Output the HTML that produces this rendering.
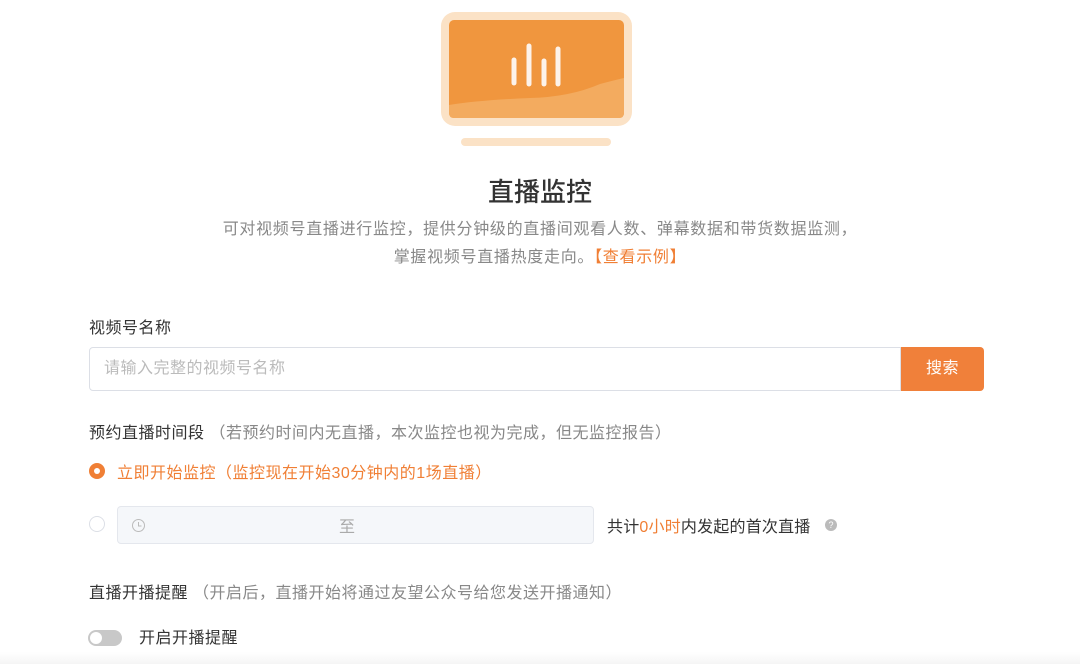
<html><head><style>
body{margin:0;width:1080px;height:664px;background:#fff;font-family:"Liberation Sans","Noto Sans CJK SC",sans-serif;position:relative;overflow:hidden;letter-spacing:0.5px}
.a{position:absolute;white-space:nowrap}
</style></head><body>
<svg class="a" style="left:0;top:0" width="1080" height="160">
<rect x="441" y="12" width="191" height="114" rx="14" fill="#fbe2c6"/>
<rect x="449" y="20" width="175" height="98" rx="5" fill="#f0963e"/>
<path d="M449 105 Q480 100 530 98 Q570 97 600 84 Q615 80 624 78 L624 113 Q624 118 619 118 L454 118 Q449 118 449 113Z" fill="#f3ab5f"/>
<g stroke="#fdf3ea" stroke-width="5" stroke-linecap="round">
<line x1="514" y1="60" x2="514" y2="83"/><line x1="529" y1="46" x2="529" y2="84"/><line x1="544" y1="61" x2="544" y2="84"/><line x1="558" y1="49" x2="558" y2="84"/></g>
<rect x="461" y="138" width="150" height="8" rx="4" fill="#fbe2c6"/>
</svg>
<div class="a" style="left:0;width:1080px;text-align:center;top:172px;font-size:26px;color:#333;font-weight:500;letter-spacing:0">直播监控</div>
<div class="a" style="left:0;width:1080px;text-align:center;top:216px;font-size:16px;color:#888;line-height:28px;letter-spacing:0.7px">可对视频号直播进行监控，提供分钟级的直播间观看人数、弹幕数据和带货数据监测，<br>掌握视频号直播热度走向。<span style="color:#f07f35">【查看示例】</span></div>
<div class="a" style="left:89px;top:314px;font-size:16px;color:#333">视频号名称</div>
<div class="a" style="left:89px;top:347px;width:812px;height:44px;border:1px solid #dcdfe6;border-radius:4px 0 0 4px;box-sizing:border-box;font-size:16px;color:#bbb;line-height:42px;padding-left:14px">请输入完整的视频号名称</div>
<div class="a" style="left:901px;top:347px;width:83px;height:44px;background:#f0803a;border-radius:0 4px 4px 0;color:#fff;font-size:16px;text-align:center;line-height:44px">搜索</div>
<div class="a" style="left:89px;top:419px;font-size:16px;color:#333">预约直播时间段<span style="color:#888"> （若预约时间内无直播，本次监控也视为完成，但无监控报告）</span></div>
<div class="a" style="left:89px;top:463px;width:16px;height:16px;border-radius:50%;background:#f07f35"><div style="margin:5px;width:6px;height:6px;border-radius:50%;background:#fff"></div></div>
<div class="a" style="left:117px;top:459px;font-size:16px;color:#f07f35">立即开始监控（监控现在开始30分钟内的1场直播）</div>
<div class="a" style="left:89px;top:516px;width:14px;height:14px;border-radius:50%;border:1px solid #dcdfe6"></div>
<div class="a" style="left:117px;top:506px;width:477px;height:38px;background:#f5f7fa;border:1px solid #e4e7ed;border-radius:4px;box-sizing:border-box"></div>
<svg class="a" style="left:131px;top:518px" width="15" height="15"><circle cx="7.5" cy="7.5" r="6" fill="none" stroke="#bbb" stroke-width="1"/><path d="M7.5 4v4h3" fill="none" stroke="#bbb"/></svg>
<div class="a" style="left:339px;top:513px;font-size:16px;color:#aaa">至</div>
<div class="a" style="left:607px;top:513px;font-size:16px;color:#333;letter-spacing:0.2px">共计<span style="color:#f07f35">0小时</span>内发起的首次直播</div>
<div class="a" style="left:825px;top:519px;width:12px;height:12px;border-radius:50%;background:#bbb;color:#fff;font-size:9px;text-align:center;line-height:12px;letter-spacing:0">?</div>
<div class="a" style="left:89px;top:579px;font-size:16px;color:#333">直播开播提醒<span style="color:#888"> （开启后，直播开始将通过友望公众号给您发送开播通知）</span></div>
<div class="a" style="left:88px;top:630px;width:34px;height:16px;border-radius:8px;background:#c8c8c8"><div style="margin:2px;width:12px;height:12px;border-radius:50%;background:#fff"></div></div>
<div class="a" style="left:139px;top:624px;font-size:16px;color:#333">开启开播提醒</div>
<div class="a" style="left:0;top:652px;width:1080px;height:12px;background:linear-gradient(#fff,#f5f5f5)"></div>
</body></html>
